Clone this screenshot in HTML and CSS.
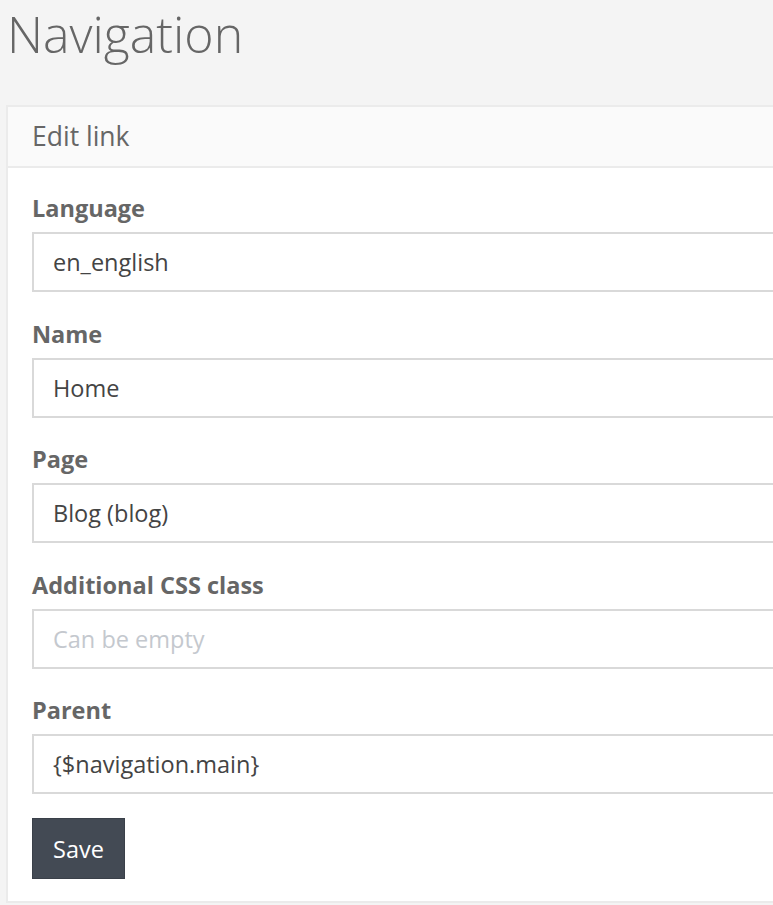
FILE: index.html
```html
<!DOCTYPE html>
<html>
<head>
<meta charset="utf-8">
<link rel="stylesheet" href="styles.css">
</head>
<body>
<h1 class="page-title">Navigation</h1>
<div class="panel">
  <div class="panel-heading">Edit link</div>
  <form class="panel-body">
    <div class="field">
      <label class="field-label">Language</label>
      <div class="field-input">en_english</div>
    </div>
    <div class="field">
      <label class="field-label">Name</label>
      <div class="field-input">Home</div>
    </div>
    <div class="field">
      <label class="field-label">Page</label>
      <div class="field-input">Blog (blog)</div>
    </div>
    <div class="field">
      <label class="field-label">Additional CSS class</label>
      <div class="field-input placeholder">Can be empty</div>
    </div>
    <div class="field">
      <label class="field-label">Parent</label>
      <div class="field-input">{$navigation.main}</div>
    </div>
    <button type="button" class="btn-save">Save</button>
  </form>
</div>
</body>
</html>
```
FILE: styles.css
```css
html, body {
  margin: 0;
  padding: 0;
  overflow: hidden;
  height: 905px;
}
body {
  background: #f4f4f4;
  font-family: "Open Sans", "Noto Sans", sans-serif;
  color: #555;
}
.page-title {
  margin: 0;
  padding: 0 0 0 7px;
  font-size: 50px;
  font-weight: 300;
  line-height: 68px;
  color: #666;
  height: 105px;
}
.panel {
  margin-left: 6px;
  width: 840px;
  background: #fff;
  border: 2px solid #ebebeb;
}
.panel-heading {
  background: #fafafa;
  border-bottom: 2px solid #ebebeb;
  height: 59px;
  line-height: 59px;
  padding-left: 24px;
  font-size: 26.5px;
  color: #666;
}
.panel-body {
  padding: 24px 24px 22px 24px;
}
.field {
  display: flex;
  flex-direction: column;
  margin-bottom: 25.5px;
}
.field:last-of-type {
  margin-bottom: 24px;
}
.field-label {
  font-weight: 700;
  font-size: 23.5px;
  line-height: 32px;
  color: #666;
  margin-bottom: 8px;
}
.field-input {
  height: 56px;
  border: 2px solid #d9d9d9;
  padding: 0 19px;
  font-size: 23.5px;
  line-height: 56px;
  color: #444;
}
.field-input.placeholder {
  color: #c4c8ce;
}
.btn-save {
  display: block;
  font-family: "Open Sans", "Noto Sans", sans-serif;
  font-size: 23.5px;
  color: #fff;
  background: #434a54;
  border: 1px solid #3a4049;
  width: 93px;
  height: 61px;
  padding: 0;
}
```
